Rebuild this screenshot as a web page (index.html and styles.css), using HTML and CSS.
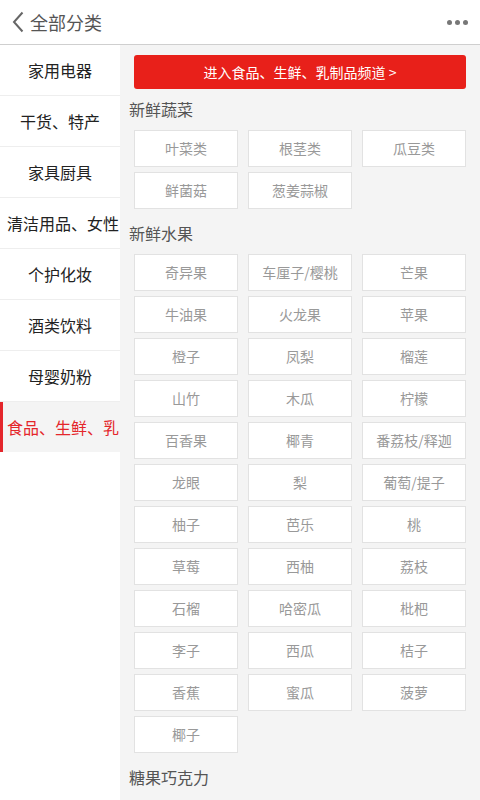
FILE: index.html
```html
<!DOCTYPE html>
<html lang="zh-CN">

<head>
    <meta charset="UTF-8">
    <title>全部分类</title>
    <link rel="stylesheet" href="styles.css">
</head>

<body>

    <header class="topbar">
        <a class="back">
            <svg width="12" height="22" viewBox="0 0 12 22">
                <path d="M10.5 1.5 L2 11 L10.5 20.5" fill="none" stroke="#666" stroke-width="2" />
            </svg>
        </a>
        <h1 class="title">全部分类</h1>
        <div class="more">
            <span></span><span></span><span></span>
        </div>
    </header>

    <main class="wrap">

        <nav class="side">
            <div class="side-item">家用电器</div>
            <div class="side-item">干货、特产</div>
            <div class="side-item">家具厨具</div>
            <div class="side-item">清洁用品、女性</div>
            <div class="side-item">个护化妆</div>
            <div class="side-item">酒类饮料</div>
            <div class="side-item">母婴奶粉</div>
            <div class="side-item valgt">食品、生鲜、乳</div>
        </nav>

        <section class="content">
            <a class="channel">进入食品、生鲜、乳制品频道 &gt;</a>

            <h2 class="sub">新鲜蔬菜</h2>
            <div class="grid">
                <a class="cell">叶菜类</a>
                <a class="cell">根茎类</a>
                <a class="cell">瓜豆类</a>
                <a class="cell">鲜菌菇</a>
                <a class="cell">葱姜蒜椒</a>
            </div>

            <h2 class="sub">新鲜水果</h2>
            <div class="grid">
                <a class="cell">奇异果</a>
                <a class="cell">车厘子/樱桃</a>
                <a class="cell">芒果</a>
                <a class="cell">牛油果</a>
                <a class="cell">火龙果</a>
                <a class="cell">苹果</a>
                <a class="cell">橙子</a>
                <a class="cell">凤梨</a>
                <a class="cell">榴莲</a>
                <a class="cell">山竹</a>
                <a class="cell">木瓜</a>
                <a class="cell">柠檬</a>
                <a class="cell">百香果</a>
                <a class="cell">椰青</a>
                <a class="cell">番荔枝/释迦</a>
                <a class="cell">龙眼</a>
                <a class="cell">梨</a>
                <a class="cell">葡萄/提子</a>
                <a class="cell">柚子</a>
                <a class="cell">芭乐</a>
                <a class="cell">桃</a>
                <a class="cell">草莓</a>
                <a class="cell">西柚</a>
                <a class="cell">荔枝</a>
                <a class="cell">石榴</a>
                <a class="cell">哈密瓜</a>
                <a class="cell">枇杷</a>
                <a class="cell">李子</a>
                <a class="cell">西瓜</a>
                <a class="cell">桔子</a>
                <a class="cell">香蕉</a>
                <a class="cell">蜜瓜</a>
                <a class="cell">菠萝</a>
                <a class="cell">椰子</a>
            </div>

            <h2 class="sub">糖果巧克力</h2>
        </section>

    </main>

</body>

</html>
```

FILE: styles.css
```css
body {
    margin: 0;
    font-family: "Noto Sans CJK SC", "Noto Sans", sans-serif;
    background-color: #fff;
    height: 800px;
    overflow: hidden;
}

.topbar {
    height: 44px;
    border-bottom: 1px solid #cfcfcf;
    display: flex;
    align-items: center;
    padding: 0 12px;
}

.back {
    display: flex;
    margin-right: 6px;
}

.title {
    margin: 0;
    font-size: 18px;
    font-weight: normal;
    color: #555;
    flex: 1;
}

.more {
    display: flex;
    gap: 3px;
}

.more span {
    width: 5px;
    height: 5px;
    border-radius: 50%;
    background-color: #777;
}

.wrap {
    display: flex;
    min-height: 755px;
}

.side {
    width: 120px;
    flex-shrink: 0;
    background-color: #fff;
}

.side-item {
    height: 50px;
    line-height: 50px;
    border-bottom: 1px solid #eee;
    padding: 0 7px;
    text-align: center;
    font-size: 16px;
    color: #222;
    white-space: nowrap;
    overflow: hidden;
}

.side-item.valgt {
    background-color: #f4f4f4;
    color: #e4262b;
    border-left: 3px solid #e4262b;
    text-align: left;
    padding-left: 4px;
    border-bottom: none;
}

.content {
    flex: 1;
    background-color: #f4f4f4;
    padding: 10px 14px 0 14px;
}

.channel {
    display: block;
    height: 34px;
    line-height: 34px;
    background-color: #e8201a;
    border-radius: 3px;
    color: #fff;
    text-align: center;
    font-size: 14px;
}

.sub {
    margin: 0 0 0 -5px;
    padding: 10px 0;
    line-height: 21px;
    font-size: 16px;
    font-weight: normal;
    color: #555;
}

.grid {
    display: grid;
    grid-template-columns: repeat(3, 1fr);
    column-gap: 10px;
    row-gap: 5px;
    margin-bottom: 4px;
}

.cell {
    height: 35px;
    line-height: 35px;
    border: 1px solid #e2e2e2;
    background-color: #fff;
    text-align: center;
    font-size: 14px;
    color: #999;
    white-space: nowrap;
}
```
